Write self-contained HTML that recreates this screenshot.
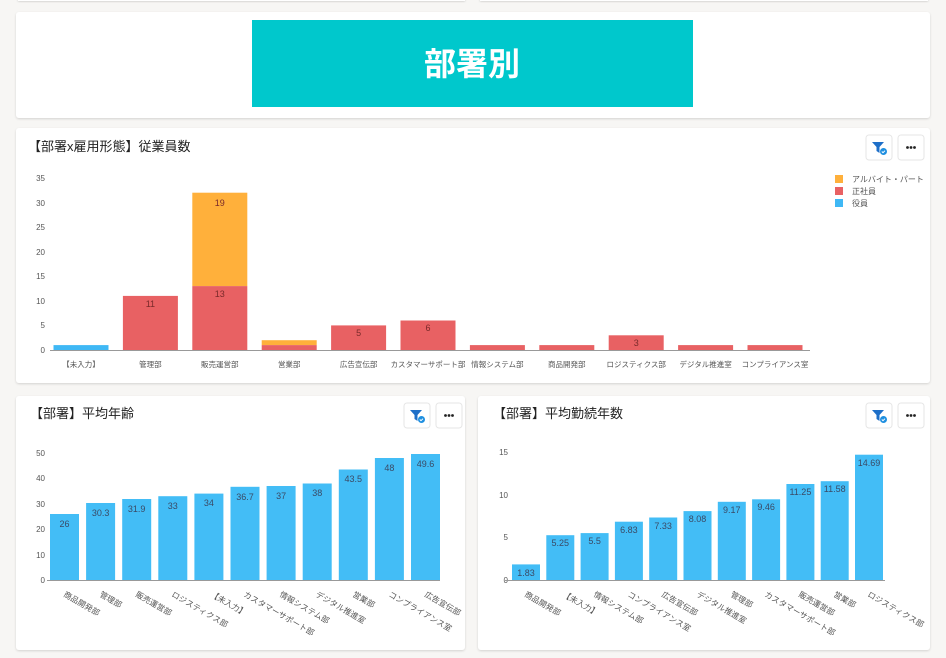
<!DOCTYPE html>
<html><head><meta charset="utf-8"><style>
html,body{margin:0;padding:0;background:#f7f6f4;}
svg{display:block;font-family:"Liberation Sans","Noto Sans CJK JP",sans-serif;}
.ax{font-size:8px;fill:#555;}
.lb{font-size:8px;fill:#555;}
.lb1{font-size:7.5px;fill:#555;}
.v{font-size:9px;fill:#3a4a66;text-anchor:middle;}
.vr{font-size:9px;fill:#7a2a2a;text-anchor:middle;}
.t{font-size:13px;fill:#222;}
</style></head><body>
<svg width="946" height="658" viewBox="0 0 946 658" xmlns="http://www.w3.org/2000/svg">
<defs>
<filter id="sh" x="-5%" y="-5%" width="110%" height="115%"><feDropShadow dx="0" dy="1" stdDeviation="1" flood-color="#000" flood-opacity="0.15"/></filter>
<g id="fil"><rect x="0" y="0" width="26" height="25" rx="3" fill="#fff" stroke="#e6e6e6"/><path d="M6 7h12l-4.5 5v6l-3-2v-4z" fill="#1e6fc8"/><circle cx="17.5" cy="16.5" r="3.5" fill="#1e8fe0"/><path d="M15.8 16.5l1.2 1.2 2-2" stroke="#fff" stroke-width="1" fill="none"/></g>
<g id="dot"><rect x="0" y="0" width="26" height="25" rx="3" fill="#fff" stroke="#e6e6e6"/><circle cx="9.5" cy="12.5" r="1.4" fill="#222"/><circle cx="13" cy="12.5" r="1.4" fill="#222"/><circle cx="16.5" cy="12.5" r="1.4" fill="#222"/></g>
</defs>
<rect x="18" y="-10" width="447" height="11" fill="#fff" filter="url(#sh)"/>
<rect x="480" y="-10" width="448" height="11" fill="#fff" filter="url(#sh)"/>
<rect x="16" y="12" width="914" height="106" rx="3" fill="#fff" filter="url(#sh)"/>
<rect x="252" y="20" width="441" height="87" fill="#00c8cc"/>
<text x="472" y="75" text-anchor="middle" font-size="32" font-weight="bold" fill="#fff">部署別</text>

<rect x="16" y="128" width="914" height="255" rx="3" fill="#fff" filter="url(#sh)"/>
<text class="t" x="28" y="151">【部署x雇用形態】従業員数</text>
<use href="#fil" x="866" y="135"/><use href="#dot" x="898" y="135"/>
<g class="ax" text-anchor="end">
<text x="45" y="353">0</text><text x="45" y="328">5</text><text x="45" y="304">10</text><text x="45" y="279">15</text><text x="45" y="255">20</text><text x="45" y="230">25</text><text x="45" y="206">30</text><text x="45" y="181">35</text>
</g>
<line x1="50" y1="350.5" x2="810" y2="350.5" stroke="#999" stroke-width="1"/>
<rect x="53.5" y="345.1" width="55" height="4.9" fill="#3fb8f5"/>
<rect x="122.9" y="295.9" width="55" height="54.1" fill="#e86163"/>
<rect x="192.3" y="192.7" width="55" height="93.4" fill="#ffb03b"/>
<rect x="192.3" y="286.1" width="55" height="63.9" fill="#e86163"/>
<rect x="261.7" y="340.2" width="55" height="4.9" fill="#ffb03b"/>
<rect x="261.7" y="345.1" width="55" height="4.9" fill="#e86163"/>
<rect x="331.1" y="325.4" width="55" height="24.6" fill="#e86163"/>
<rect x="400.5" y="320.5" width="55" height="29.5" fill="#e86163"/>
<rect x="469.9" y="345.1" width="55" height="4.9" fill="#e86163"/>
<rect x="539.3" y="345.1" width="55" height="4.9" fill="#e86163"/>
<rect x="608.7" y="335.3" width="55" height="14.7" fill="#e86163"/>
<rect x="678.1" y="345.1" width="55" height="4.9" fill="#e86163"/>
<rect x="747.5" y="345.1" width="55" height="4.9" fill="#e86163"/>
<text class="vr" x="150.4" y="307">11</text><text class="vr" x="219.8" y="206">19</text><text class="vr" x="219.8" y="297">13</text>
<text class="vr" x="358.6" y="336">5</text><text class="vr" x="428" y="331">6</text><text class="vr" x="636.2" y="346" font-size="7">3</text>
<g class="lb1" text-anchor="middle">
<text x="81" y="367">【未入力】</text><text x="150.4" y="367">管理部</text><text x="219.8" y="367">販売運営部</text><text x="289.2" y="367">営業部</text><text x="358.6" y="367">広告宣伝部</text><text x="428" y="367">カスタマーサポート部</text><text x="497.4" y="367">情報システム部</text><text x="566.8" y="367">商品開発部</text><text x="636.2" y="367">ロジスティクス部</text><text x="705.6" y="367">デジタル推進室</text><text x="775" y="367">コンプライアンス室</text>
</g>
<rect x="835" y="175" width="8" height="8" fill="#ffb03b"/><text class="lb" x="852" y="182">アルバイト・パート</text>
<rect x="835" y="187" width="8" height="8" fill="#e86163"/><text class="lb" x="852" y="194">正社員</text>
<rect x="835" y="199" width="8" height="8" fill="#3fb8f5"/><text class="lb" x="852" y="206">役員</text>

<rect x="16" y="396" width="449" height="254" rx="3" fill="#fff" filter="url(#sh)"/>
<text class="t" x="30" y="418">【部署】平均年齢</text>
<use href="#fil" x="404" y="403"/><use href="#dot" x="436" y="403"/>
<g class="ax" text-anchor="end">
<text x="45" y="583">0</text><text x="45" y="558">10</text><text x="45" y="532">20</text><text x="45" y="507">30</text><text x="45" y="481">40</text><text x="45" y="456">50</text>
</g>
<line x1="47" y1="580.5" x2="440" y2="580.5" stroke="#999"/>
<g fill="#43bdf6">
<rect x="50" y="514" width="29" height="66"/><rect x="86.1" y="503" width="29" height="77"/><rect x="122.2" y="499" width="29" height="81"/><rect x="158.3" y="496.2" width="29" height="83.8"/><rect x="194.4" y="493.6" width="29" height="86.4"/><rect x="230.5" y="486.8" width="29" height="93.2"/><rect x="266.6" y="486" width="29" height="94"/><rect x="302.7" y="483.5" width="29" height="96.5"/><rect x="338.8" y="469.5" width="29" height="110.5"/><rect x="374.9" y="458" width="29" height="122"/><rect x="411" y="454" width="29" height="126"/>
</g>
<g class="v">
<text x="64.5" y="527">26</text><text x="100.6" y="516">30.3</text><text x="136.7" y="512">31.9</text><text x="172.8" y="509">33</text><text x="208.9" y="506">34</text><text x="245" y="500">36.7</text><text x="281.1" y="499">37</text><text x="317.2" y="496">38</text><text x="353.3" y="482">43.5</text><text x="389.4" y="471">48</text><text x="425.5" y="467">49.6</text>
</g>
<g class="lb">
<text transform="translate(63,596) rotate(30)">商品開発部</text>
<text transform="translate(99,596) rotate(30)">管理部</text>
<text transform="translate(135,596) rotate(30)">販売運営部</text>
<text transform="translate(171,596) rotate(30)">ロジスティクス部</text>
<text transform="translate(210,596) rotate(30)">【未入力】</text>
<text transform="translate(243,596) rotate(30)">カスタマーサポート部</text>
<text transform="translate(279,596) rotate(30)">情報システム部</text>
<text transform="translate(315,596) rotate(30)">デジタル推進室</text>
<text transform="translate(352,596) rotate(30)">営業部</text>
<text transform="translate(388,596) rotate(30)">コンプライアンス室</text>
<text transform="translate(424,596) rotate(30)">広告宣伝部</text>
</g>

<rect x="478" y="396" width="452" height="254" rx="3" fill="#fff" filter="url(#sh)"/>
<text class="t" x="493" y="418">【部署】平均勤続年数</text>
<use href="#fil" x="866" y="403"/><use href="#dot" x="898" y="403"/>
<g class="ax" text-anchor="end">
<text x="508" y="583">0</text><text x="508" y="540">5</text><text x="508" y="498">10</text><text x="508" y="455">15</text>
</g>
<line x1="505" y1="580.5" x2="885" y2="580.5" stroke="#999"/>
<g fill="#43bdf6">
<rect x="512" y="564.4" width="28" height="15.6"/><rect x="546.3" y="535.2" width="28" height="44.8"/><rect x="580.6" y="533.1" width="28" height="46.9"/><rect x="614.9" y="521.7" width="28" height="58.3"/><rect x="649.2" y="517.5" width="28" height="62.5"/><rect x="683.5" y="511.1" width="28" height="68.9"/><rect x="717.8" y="501.8" width="28" height="78.2"/><rect x="752.1" y="499.3" width="28" height="80.7"/><rect x="786.4" y="484" width="28" height="96"/><rect x="820.7" y="481.2" width="28" height="98.8"/><rect x="855" y="454.7" width="28" height="125.3"/>
</g>
<g class="v">
<text x="526" y="576">1.83</text><text x="560.3" y="546">5.25</text><text x="594.6" y="544">5.5</text><text x="628.9" y="533">6.83</text><text x="663.2" y="529">7.33</text><text x="697.5" y="522">8.08</text><text x="731.8" y="513">9.17</text><text x="766.1" y="510">9.46</text><text x="800.4" y="495">11.25</text><text x="834.7" y="492">11.58</text><text x="869" y="466">14.69</text>
</g>
<g class="lb">
<text transform="translate(524,596) rotate(30)">商品開発部</text>
<text transform="translate(562,596) rotate(30)">【未入力】</text>
<text transform="translate(593,596) rotate(30)">情報システム部</text>
<text transform="translate(627,596) rotate(30)">コンプライアンス室</text>
<text transform="translate(661,596) rotate(30)">広告宣伝部</text>
<text transform="translate(696,596) rotate(30)">デジタル推進室</text>
<text transform="translate(730,596) rotate(30)">管理部</text>
<text transform="translate(764,596) rotate(30)">カスタマーサポート部</text>
<text transform="translate(798,596) rotate(30)">販売運営部</text>
<text transform="translate(833,596) rotate(30)">営業部</text>
<text transform="translate(867,596) rotate(30)">ロジスティクス部</text>
</g>
</svg>
</body></html>
